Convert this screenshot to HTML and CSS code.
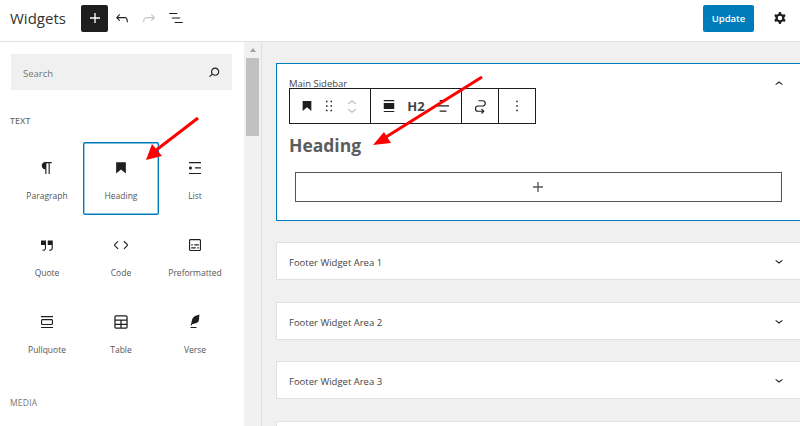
FILE: index.html
```html
<!DOCTYPE html>
<html lang="en">
<head>
<meta charset="utf-8">
<title>Widgets</title>
<link rel="stylesheet" href="styles.css">
</head>
<body>
<div class="app">
  <header class="topbar">
    <h1 class="title">Widgets</h1>
    <button class="add"><svg viewBox="0 0 24 24" class="i20 white"><path d="M18 11.2h-5.2V6h-1.600v5.200H6v1.600h5.200V18h1.600v-5.200H18z"/></svg></button>
    <div class="tools">
      <svg viewBox="0 0 24 24" class="i18"><path d="M18.3 11.700c-.6-.6-1.400-.9-2.300-.9H6.700l2.900-3.300-1.100-1-4.500 5L8.500 16l1-1-2.700-2.700H16c.5 0 .9.2 1.300.5 1 1 1 3.400 1 4.500v.3h1.500v-.2c0-1.500 0-4.300-1.500-5.700z"/></svg>
      <svg viewBox="0 0 24 24" class="i18 faint"><path d="M15.600 6.500l-1.100 1 2.900 3.300H8c-.9 0-1.700.3-2.300.9-1.400 1.500-1.400 4.200-1.400 5.600v.2h1.500v-.3c0-1.100 0-3.500 1-4.500.3-.3.7-.5 1.300-.5h9.200L14.500 15l1.100 1.100 4.600-4.600-4.600-5z"/></svg>
      <svg viewBox="0 0 24 24" class="i18"><path d="M13.800 5.200H3v1.500h10.800V5.200zm-3.600 12v1.500H21v-1.500H10.200zm7.200-6H6.600v1.500h10.800v-1.500z"/></svg>
    </div>
    <button class="update">Update</button>
    <svg viewBox="0 0 24 24" class="i18 gear"><path fill-rule="evenodd" d="M10.289 4.836A1 1 0 0111.275 4h1.306a1 1 0 01.987.836l.244 1.466c.787.26 1.503.679 2.108 1.218l1.393-.522a1 1 0 011.216.437l.653 1.13a1 1 0 01-.23 1.273l-1.148.944a6.025 6.025 0 010 2.435l1.149.946a1 1 0 01.23 1.272l-.653 1.13a1 1 0 01-1.216.437l-1.394-.522c-.605.54-1.32.958-2.108 1.218l-.244 1.466a1 1 0 01-.987.836h-1.306a1 1 0 01-.986-.836l-.244-1.466a5.995 5.995 0 01-2.108-1.218l-1.394.522a1 1 0 01-1.217-.436l-.653-1.131a1 1 0 01.23-1.272l1.149-.946a6.026 6.026 0 010-2.435l-1.148-.944a1 1 0 01-.23-1.272l.653-1.131a1 1 0 011.217-.437l1.393.522a5.994 5.994 0 012.108-1.218l.244-1.466zM14.929 12a3 3 0 11-6 0 3 3 0 016 0z"/></svg>
  </header>
  <div class="body">
    <aside class="inserter">
      <div class="search"><span>Search</span><svg viewBox="0 0 24 24" class="i18"><path d="M13.500 6C10.500 6 8 8.500 8 11.500c0 1.100.3 2.100.9 3l-3.400 3 1 1.100 3.400-2.900c1 .9 2.200 1.400 3.600 1.400 3 0 5.500-2.500 5.500-5.500C19 8.500 16.500 6 13.500 6zm0 9.500c-2.200 0-4-1.800-4-4s1.800-4 4-4 4 1.800 4 4-1.800 4-4 4z"/></svg></div>
      <div class="cat">Text</div>
      <div class="grid">
        <div class="item"><svg viewBox="0 0 24 24" class="i18"><path d="M18.300 4H9.900v-.1l-.9.2c-2.300.4-4 2.400-4 4.800s1.700 4.400 4 4.800l.7.1V20h1.500V5.500h2.900V20h1.500V5.500h2.700V4z"/></svg><span>Paragraph</span></div>
        <div class="item selected"><svg viewBox="0 0 24 24" class="i20 big"><path d="M6.200 5.200v13.400l5.800-4.800 5.800 4.800V5.200z"/></svg><span>Heading</span></div>
        <div class="item"><svg viewBox="0 0 24 24" class="i18"><path d="M4 4v1.500h16V4H4zm8 8.500h8V11h-8v1.500zM4 20h16v-1.500H4V20zm4-8c0-1.100-.9-2-2-2s-2 .9-2 2 .9 2 2 2 2-.9 2-2z"/></svg><span>List</span></div>
        <div class="item"><svg viewBox="0 0 24 24" class="i18"><path d="M13 6v6h5.200v4c0 .8-.2 1.400-.5 1.700-.6.6-1.600.6-2.500.5h-.3v1.500h.5c1 0 2.300-.1 3.300-1 .6-.6 1-1.600 1-2.800V6H13zm-9 6h5.200v4c0 .8-.2 1.400-.5 1.700-.6.6-1.600.6-2.500.5h-.3v1.500h.5c1 0 2.300-.1 3.300-1 .6-.6 1-1.600 1-2.800V6H4v6z"/></svg><span>Quote</span></div>
        <div class="item"><svg viewBox="0 0 24 24" class="i18"><path d="M20.800 10.700l-4.300-4.300-1.100 1.100 4.300 4.300c.1.1.1.3 0 .4l-4.300 4.300 1.100 1.100 4.300-4.300c.7-.8.7-1.900 0-2.600zM4.200 11.800l4.300-4.300-1-1-4.300 4.300c-.7.7-.7 1.800 0 2.500l4.300 4.300 1.100-1.100-4.300-4.300c-.2-.1-.2-.3-.1-.4z"/></svg><span>Code</span></div>
        <div class="item"><svg viewBox="0 0 24 24" class="i18"><path d="M18 4H6c-1.100 0-2 .9-2 2v12c0 1.100.9 2 2 2h12c1.100 0 2-.9 2-2V6c0-1.100-.9-2-2-2zm.5 14c0 .3-.2.5-.5.5H6c-.3 0-.5-.2-.5-.5V6c0-.3.2-.5.5-.5h12c.3 0 .5.2.5.5v12zM7 16.500h6V15H7v1.500zm4-4h6V11h-6v1.500zM9 11H7v1.500h2V11zm6 5.500h2V15h-2v1.500z"/></svg><span>Preformatted</span></div>
        <div class="item"><svg viewBox="0 0 24 24" class="i18"><path d="M18 8H6c-1.100 0-2 .9-2 2v4c0 1.100.9 2 2 2h12c1.100 0 2-.9 2-2v-4c0-1.100-.9-2-2-2zm.5 6c0 .3-.2.5-.5.5H6c-.3 0-.5-.2-.5-.5v-4c0-.3.2-.5.5-.5h12c.3 0 .5.2.5.5v4zM4 4v1.500h16V4H4zm0 16h16v-1.500H4V20z"/></svg><span>Pullquote</span></div>
        <div class="item"><svg viewBox="0 0 24 24" class="i20 big"><path fill-rule="evenodd" d="M6 4h12a2 2 0 012 2v12a2 2 0 01-2 2H6a2 2 0 01-2-2V6a2 2 0 012-2zm-.5 5h13V6a.5.5 0 00-.5-.5H6a.5.5 0 00-.5.5v3zm0 1.500V14h5.750v-3.500H5.500zm7.250 0V14h5.750v-3.500h-5.750zM5.500 15.500V18a.5.5 0 00.5.5h5.250v-3H5.500zm7.250 0v3H18a.5.5 0 00.5-.5v-2.500h-5.750z"/></svg><span>Table</span></div>
        <div class="item"><svg viewBox="0 0 24 24" class="i18"><path d="M17.800 2l-.9.3c-.1 0-3.600 1-5.200 2.100C10 5.500 9.300 6.500 8.900 7.100c-.6.9-1.700 4.700-1.700 6.300l-.9 2.300c-.2.4 0 .8.4 1 .1 0 .2.1.3.1.3 0 .6-.2.7-.5l.6-1.500c.3 0 .7-.1 1.200-.2.7-.1 1.400-.3 2.200-.5.8-.2 1.600-.5 2.400-.8.7-.3 1.400-.7 1.900-1.200s.8-1.200 1-1.900c.2-.7.3-1.600.4-2.400.1-.8.1-1.700.2-2.500 0-.8.1-1.500.2-2.100V2zM6 20h8v-1.500H6V20z"/></svg><span>Verse</span></div>
      </div>
      <div class="cat media">Media</div>
    </aside>
    <div class="scrollbar"><div class="arrow"></div><div class="thumb"></div></div>
    <main class="areas">
      <section class="card open">
        <div class="card-head"><span>Main Sidebar</span><svg viewBox="0 0 24 24" class="i16"><path d="M6.500 12.400L12 8l5.500 4.400-.9 1.200L12 10l-4.500 3.600-1-1.200z"/></svg></div>
        <div class="toolbar">
          <div class="tgroup g1">
            <svg viewBox="0 0 24 24" class="i18"><path d="M6.200 5.200v13.400l5.800-4.800 5.800 4.800V5.200z"/></svg>
            <svg viewBox="0 0 24 24" class="i18"><path d="M8 7h2V5H8v2zm0 6h2v-2H8v2zm0 6h2v-2H8v2zm6-14v2h2V5h-2zm0 8h2v-2h-2v2zm0 6h2v-2h-2v2z"/></svg>
            <div class="mover">
              <svg viewBox="0 0 24 12" class="mv"><path d="M6.500 8.400L12 4l5.500 4.400-.9 1.200L12 6 7.500 9.600l-1-1.200z"/></svg>
              <svg viewBox="0 0 24 12" class="mv"><path d="M17.500 3.600L12 8 6.500 3.600l.9-1.200L12 6l4.600-3.600 1 1.200z"/></svg>
            </div>
          </div>
          <div class="tgroup g2">
            <svg viewBox="0 0 24 24" class="i18"><path d="M5 5.500h14V4H5zm0 14.500h14v-1.500H5zM5 8h14v8H5z"/></svg>
            <b class="h2">H2</b>
            <svg viewBox="0 0 24 24" class="i18"><path d="M7.500 5.500h9V4h-9v1.500zm-3.500 7h16V11H4v1.500zm3.500 7h9V18h-9v1.500z"/></svg>
          </div>
          <div class="tgroup g3"><svg viewBox="0 0 24 24" class="i18 stroke"><path d="M10 5h5.500a3.500 3.500 0 010 7h-6a3.500 3.500 0 000 7H17"/><path d="M14 16l3 3-3 3"/></svg></div>
          <div class="tgroup g4"><svg viewBox="0 0 24 24" class="i18"><path d="M13 19h-2v-2h2v2zm0-6h-2v-2h2v2zm0-6h-2V5h2v2z"/></svg></div>
        </div>
        <h2 class="block-heading">Heading</h2>
        <div class="appender"><svg viewBox="0 0 24 24" class="i20 dim"><path d="M18 11.200h-5.200V6h-1.600v5.200H6v1.600h5.200V18h1.600v-5.200H18z"/></svg></div>
      </section>
      <section class="card"><span>Footer Widget Area 1</span><svg viewBox="0 0 24 24" class="i16"><path d="M17.500 11.600L12 16l-5.500-4.400.9-1.200L12 14l4.600-3.600 1 1.200z"/></svg></section>
      <section class="card"><span>Footer Widget Area 2</span><svg viewBox="0 0 24 24" class="i16"><path d="M17.500 11.600L12 16l-5.500-4.400.9-1.200L12 14l4.600-3.600 1 1.200z"/></svg></section>
      <section class="card"><span>Footer Widget Area 3</span><svg viewBox="0 0 24 24" class="i16"><path d="M17.500 11.600L12 16l-5.500-4.400.9-1.200L12 14l4.600-3.600 1 1.200z"/></svg></section>
      <section class="card"></section>
    </main>
  </div>
  <svg class="annotations" viewBox="0 0 800 426">
    <path d="M198 118L155 151" class="arrow-line"/>
    <path d="M146 160L152 144L162 156z" class="arrow-head"/>
    <path d="M482 77L386 137" class="arrow-line"/>
    <path d="M373 145L384 132L391 143z" class="arrow-head"/>
  </svg>
</div>
</body>
</html>
```
FILE: styles.css
```css
* { box-sizing: border-box; }
html, body { margin: 0; height: 100%; }
body { font-family: "Open Sans", "Liberation Sans", sans-serif; color: #1e1e1e; background: #fff; overflow: hidden; }
svg { display: block; flex: none; fill: #1e1e1e; }
button { border: 0; padding: 0; font: inherit; }
.app { position: relative; width: 800px; height: 426px; display: flex; flex-direction: column; overflow: hidden; }

.i20 { width: 20px; height: 20px; }
.i18 { width: 18px; height: 18px; }
.i16 { width: 16px; height: 16px; }
.white { fill: #fff; }
.faint { fill: #c4c4c4; }
.dim { fill: #555; }
.stroke { fill: none; stroke: #1e1e1e; stroke-width: 1.500; }

.topbar { height: 42px; flex: none; display: flex; align-items: center; padding: 0 11px 5px 10px; border-bottom: 1px solid #e0e0e0; }
.title { margin: 0; width: 71px; font-size: 15px; font-weight: 400; line-height: 20px; color: #333; }
.add { width: 27px; height: 27px; background: #1e1e1e; border-radius: 2px; display: flex; align-items: center; justify-content: center; }
.tools { display: flex; gap: 9px; margin-left: 5px; }
.update { margin-left: auto; width: 51px; height: 27px; background: #007cba; color: #fff; font-size: 9.500px; font-weight: 600; border-radius: 2px; }
.gear { margin-left: 17px; }

.body { flex: 1; display: flex; min-height: 0; }
.inserter { width: 244px; flex: none; padding: 12px 12px 0 10px; background: #fff; }
.search { height: 36px; margin-left: 1px; background: #f0f0f0; display: flex; align-items: center; justify-content: space-between; padding: 0 9px 0 12px; font-size: 9.500px; color: #757575; }
.search span { padding-top: 2px; }
.cat { margin-top: 25px; font-size: 8.500px; line-height: 12px; letter-spacing: .2px; text-transform: uppercase; color: #757575; font-weight: 600; }
.media { margin-top: 28px; font-weight: 400; }
.grid { margin-top: 15px; display: grid; grid-template-columns: repeat(3, 74px); grid-auto-rows: 73px; row-gap: 4px; }
.item { display: flex; flex-direction: column; align-items: center; padding-top: 17px; gap: 12px; border-radius: 2px; font-size: 8.500px; line-height: 14px; color: #555; }
.big { margin: -1px 0; }
.selected { box-shadow: inset 0 0 0 1.400px #007cba; margin: 0 -1px; }

.scrollbar { width: 18px; flex: none; background: #f1f1f1; border-right: 1px solid #e0e0e0; padding: 6px 2px 0 2px; }
.arrow { width: 0; height: 0; margin: 0 auto; border: 3px solid transparent; border-top: 0; border-bottom: 4px solid #a3a3a3; }
.thumb { margin-top: 6px; height: 78px; background: #c1c1c1; }

.areas { flex: 1; min-width: 0; background: #f0f0f0; padding: 21px 0 0 14px; display: flex; flex-direction: column; gap: 21.400px; }
.card { height: 38px; flex: none; background: #fff; border: 1px solid #e0e0e0; border-right: 0; display: flex; align-items: center; justify-content: space-between; padding: 0 13px 0 12px; font-size: 9.500px; color: #444; }
.card > span { padding-top: 3px; }
.open { position: relative; display: block; height: 158px; padding: 0; border-color: #007cba; }
.card-head { height: 40px; display: flex; align-items: center; justify-content: space-between; padding: 0 13px 0 12px; }
.card-head span { margin-top: -2px; }

.toolbar { position: absolute; left: 12px; top: 24px; height: 36px; display: flex; background: #fff; border: 1px solid #1e1e1e; }
.tgroup { display: flex; align-items: center; border-right: 1px solid #1e1e1e; }
.tgroup:last-child { border-right: 0; }
.g1 { width: 81px; padding-left: 8px; gap: 4px; }
.g2 { width: 91px; padding-left: 9px; }
.g3 { width: 37px; justify-content: center; }
.g4 { width: 36px; justify-content: center; }
.mover { display: flex; flex-direction: column; margin-left: 1px; gap: 1px; }
.mv { width: 18px; height: 9px; fill: #bbb; }
.h2 { width: 26px; margin: 0 5px 0 5px; text-align: center; font-size: 13px; line-height: 16px; }

.block-heading { margin: 29px 0 0 12px; font-size: 17.500px; line-height: 24px; font-weight: 700; color: #5c5c5c; }
.appender { margin: 15px 18px 0 18px; height: 30px; padding-right: 2px; border: 1px solid #555; display: flex; align-items: center; justify-content: center; }

.annotations { position: absolute; left: 0; top: 0; width: 800px; height: 426px; pointer-events: none; fill: none; }
.arrow-line { stroke: #f00; stroke-width: 3; fill: none; }
.arrow-head { fill: #f00; }
```
